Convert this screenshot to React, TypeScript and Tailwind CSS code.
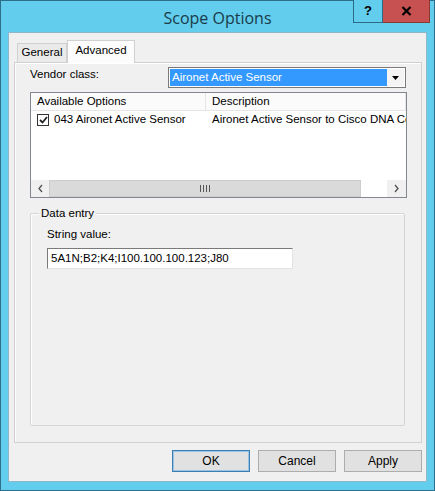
import React from "react";

const ui = { fontFamily: '"Liberation Sans", Arial, sans-serif' };

function Chevron({ dir }: { dir: "left" | "right" }) {
  return (
    <svg width="7" height="9" viewBox="0 0 7 9">
      <path
        d={dir === "left" ? "M5 1 L2 4.5 L5 8" : "M2 1 L5 4.5 L2 8"}
        fill="none"
        stroke="#505050"
        strokeWidth="1.3"
      />
    </svg>
  );
}

function DialogButton({ label, isDefault }: { label: string; isDefault?: boolean }) {
  return (
    <button
      type="button"
      className={`flex h-[22px] w-[78px] items-center justify-center border bg-[#e1e1e1] text-[12px] text-black ${
        isDefault ? "border-[#3c7fb1] shadow-[inset_0_0_0_1px_#9cc3e5]" : "border-[#adadad]"
      }`}
    >
      {label}
    </button>
  );
}

export default function App() {
  return (
    <div
      className="flex h-[491px] w-[435px] flex-col border border-[#2d6f8a] bg-[#62cdec] text-[11.5px] text-black"
      style={ui}
    >
      {/* title bar */}
      <div className="relative flex h-[31px] shrink-0 items-center justify-center">
        <span
          className="pt-[2px] text-[16px] text-[#1b3b4a]"
          style={{ fontFamily: '"Open Sans", "Noto Sans", sans-serif' }}
        >
          Scope Options
        </span>
        <div className="absolute right-[4px] top-[-1px] flex">
          <div className="flex h-[23px] w-[30px] items-center justify-center border border-t-0 border-[#2a6b85] bg-[#62cdec] text-[13px] font-bold">
            ?
          </div>
          <div className="flex h-[23px] w-[47px] items-center justify-center border border-l-0 border-t-0 border-[#8a3a33] bg-[#c75050]">
            <svg width="11" height="10" viewBox="0 0 11 10">
              <path d="M1.5 1 L9.5 9 M9.5 1 L1.5 9" stroke="#000" strokeWidth="2.2" />
            </svg>
          </div>
        </div>
      </div>

      {/* client area */}
      <div className="mx-[7px] flex flex-1 flex-col border border-[#8fb7c8] bg-[#f0f0f0]">
        {/* tabs */}
        <div className="ml-[8px] mt-[7px] flex h-[22px] items-end">
          <div className="flex h-[19px] w-[50px] items-center justify-center border border-b-0 border-[#d0d0d0] bg-[#eaeaea] text-[11.5px]">
            General
          </div>
          <div className="relative z-10 mb-[-1px] flex h-[23px] w-[68px] items-center justify-center border border-b-0 border-[#d0d0d0] bg-[#fcfcfc] pb-[2px]">
            Advanced
          </div>
        </div>

        {/* tab panel */}
        <div className="ml-[5px] mr-[4px] flex h-[381px] flex-col border border-[#d0d0d0] bg-[#f0f0f0] px-[15px] shadow-[inset_1px_1px_0_#fff]">
          {/* vendor class */}
          <div className="mt-[4px] flex h-[21px] items-center justify-between">
            <span className="mt-[-5px]">Vendor class:</span>
            <div className="flex h-[21px] w-[238px] border border-[#7a7a7a] bg-white p-[1px]">
              <div className="flex flex-1 items-center bg-[#3399ff] pl-[2px] text-white">
                Aironet Active Sensor
              </div>
              <div className="flex w-[17px] items-center justify-center bg-[#f4f4f4]">
                <svg width="7" height="4" viewBox="0 0 7 4">
                  <path d="M0 0 H7 L3.5 4 Z" fill="#000" />
                </svg>
              </div>
            </div>
          </div>

          {/* list view */}
          <div className="mt-[4px] flex h-[106px] w-[377px] flex-col border border-[#828790] bg-white">
            <div className="flex h-[18px] border-b border-[#e5e5e5] bg-[#fbfbfb]">
              <div className="flex w-[175px] items-center border-r border-[#e5e5e5] pl-[6px]">
                Available Options
              </div>
              <div className="flex flex-1 items-center border-r border-[#e5e5e5] pl-[6px]">
                Description
              </div>
            </div>
            <div className="flex h-[18px] items-center whitespace-nowrap">
              <div className="flex w-[175px] items-center pl-[6px]">
                <div className="mr-[5px] flex h-[12px] w-[12px] items-center justify-center border border-[#333] bg-white">
                  <svg width="9" height="8" viewBox="0 0 9 8">
                    <path d="M1 4 L3.5 6.5 L8 1" fill="none" stroke="#222" strokeWidth="1.8" />
                  </svg>
                </div>
                043 Aironet Active Sensor
              </div>
              <div className="flex-1 overflow-hidden pl-[6px]">
                Aironet Active Sensor to Cisco DNA Center
              </div>
            </div>
            <div className="flex-1" />
            {/* horizontal scrollbar */}
            <div className="flex h-[17px] bg-[#f0f0f0]">
              <div className="flex w-[18px] items-center justify-center">
                <Chevron dir="left" />
              </div>
              <div className="flex w-[312px] items-center justify-center border border-[#cdcdcd] bg-[#dadada]">
                <div className="flex gap-[2px]">
                  <div className="h-[7px] w-[1px] bg-[#555]" />
                  <div className="h-[7px] w-[1px] bg-[#555]" />
                  <div className="h-[7px] w-[1px] bg-[#555]" />
                  <div className="h-[7px] w-[1px] bg-[#555]" />
                </div>
              </div>
              <div className="w-[26px] bg-white" />
              <div className="flex flex-1 items-center justify-center">
                <Chevron dir="right" />
              </div>
            </div>
          </div>

          {/* data entry group */}
          <div className="relative mt-[15px] h-[213px] w-[375px] rounded-[2px] border border-[#d5d5d5] px-[16px] shadow-[inset_1px_1px_0_#fff]">
            <span className="absolute left-[8px] top-[-8px] bg-[#f0f0f0] px-[2px] leading-[14px]">
              Data entry
            </span>
            <div className="mt-[12px]">String value:</div>
            <div className="mt-[5px] flex h-[21px] w-[246px] items-center border border-[#7a7a7a] border-b-[#e3e3e3] border-r-[#e3e3e3] bg-white pl-[3px]">
              5A1N;B2;K4;I100.100.100.123;J80
            </div>
          </div>
        </div>

        {/* dialog buttons */}
        <div className="mr-[4px] mt-[7px] flex justify-end gap-[8px]">
          <DialogButton label="OK" isDefault />
          <DialogButton label="Cancel" />
          <DialogButton label="Apply" />
        </div>
      </div>
      <div className="h-[8px] shrink-0" />
    </div>
  );
}
